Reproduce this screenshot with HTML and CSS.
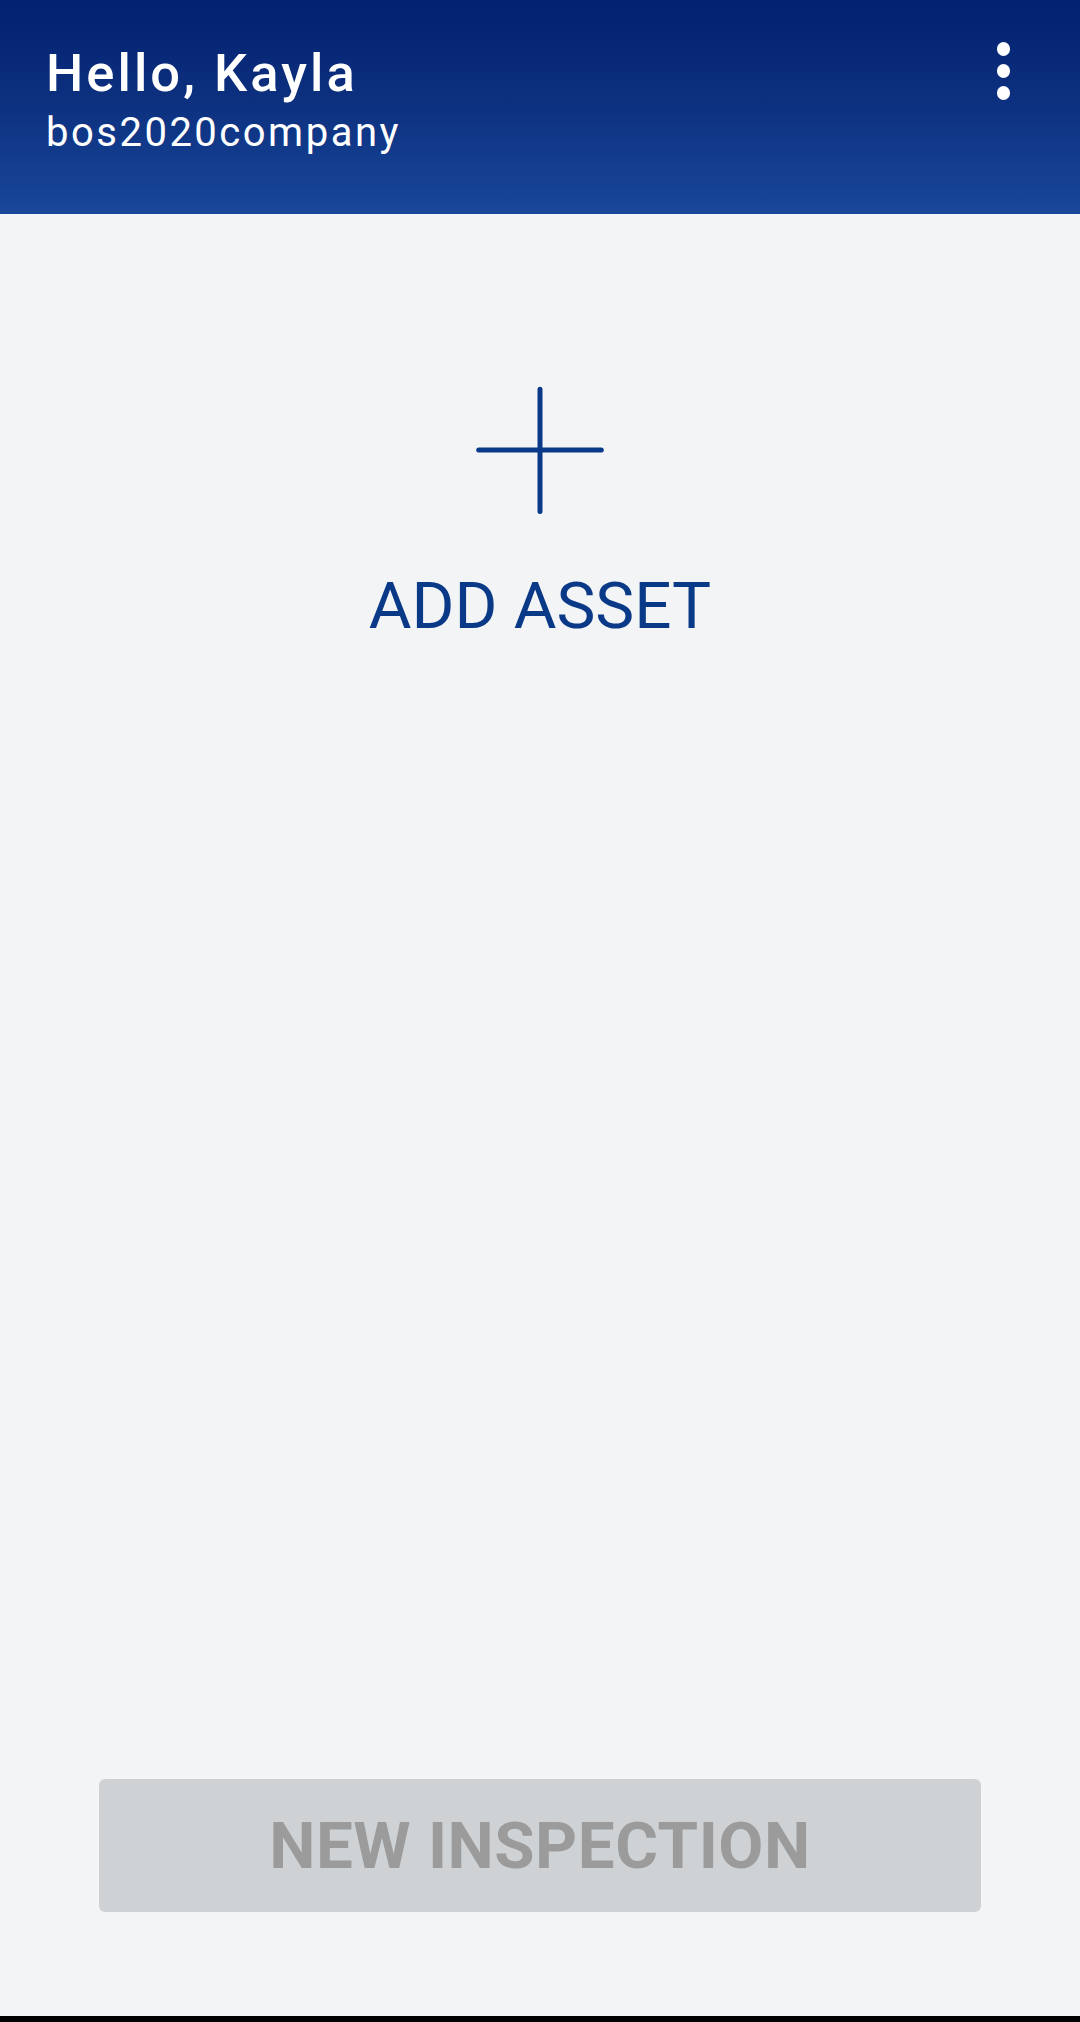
FILE: index.html
```html
<!DOCTYPE html>
<html lang="en">
<head>
<meta charset="utf-8">
<title>Home</title>
<link rel="stylesheet" href="styles.css">
</head>
<body>
<div class="app">
  <header class="topbar">
    <div class="greeting">
      <div class="title">Hello, Kayla</div>
      <div class="subtitle">bos2020company</div>
    </div>
    <button class="menu" aria-label="More options">
      <span class="dot"></span><span class="dot"></span><span class="dot"></span>
    </button>
  </header>
  <main class="content">
    <button class="add-asset">
      <svg class="plus" width="140" height="140" viewBox="0 0 140 140" aria-hidden="true">
        <path d="M70 9.2V131.5M8.7 70H131.3" stroke="#0a3a87" stroke-width="5" stroke-linecap="round" fill="none"/>
      </svg>
      <span class="add-label">ADD ASSET</span>
    </button>
  </main>
  <footer class="actions">
    <button class="primary" disabled>NEW INSPECTION</button>
  </footer>
  <div class="navbar"></div>
</div>
</body>
</html>
```
FILE: styles.css
```css
* { box-sizing: border-box; }
html, body { margin: 0; padding: 0; }
body {
  font-family: Roboto, "Noto Sans", sans-serif;
  background: #f2f4f6;
}
.app {
  width: 1080px;
  height: 2022px;
  display: flex;
  flex-direction: column;
}
.topbar {
  height: 214px;
  flex: none;
  background: linear-gradient(180deg, #022170 0%, #0c2f7e 45%, #19479a 100%);
  display: flex;
  justify-content: space-between;
  align-items: flex-start;
  padding: 42px 0 0 46px;
  color: #fff;
}
.title {
  font-size: 52.5px;
  line-height: 62px;
  font-weight: 500;
  letter-spacing: 3.05px;
}
.subtitle {
  margin-top: 5px;
  font-size: 40px;
  line-height: 48px;
  font-weight: 400;
  letter-spacing: 2.5px;
}
.menu {
  margin: 0 70px 0 0;
  padding: 0;
  border: 0;
  background: none;
  display: flex;
  flex-direction: column;
  gap: 8.5px;
}
.dot {
  width: 13.5px;
  height: 13.5px;
  border-radius: 50%;
  background: #fff;
}
.content {
  flex: 1;
  display: flex;
  justify-content: center;
  align-items: flex-start;
  padding-top: 166px;
}
.add-asset {
  border: 0;
  background: none;
  padding: 0;
  display: flex;
  flex-direction: column;
  align-items: center;
  gap: 48px;
  font-family: inherit;
}
.plus { display: block; }
.add-label {
  font-size: 65.5px;
  line-height: 75px;
  color: #0a3a87;
  font-weight: 400;
}
.actions {
  flex: none;
  padding: 0 99px 104px;
}
.primary {
  width: 100%;
  height: 133px;
  border: 0;
  border-radius: 6px;
  background: #cfd2d5;
  color: #9b9b9b;
  font-family: inherit;
  font-size: 65.5px;
  font-weight: 700;
  letter-spacing: 0.5px;
  padding: 0;
}
.navbar {
  flex: none;
  height: 6px;
  background: #000;
}
```
